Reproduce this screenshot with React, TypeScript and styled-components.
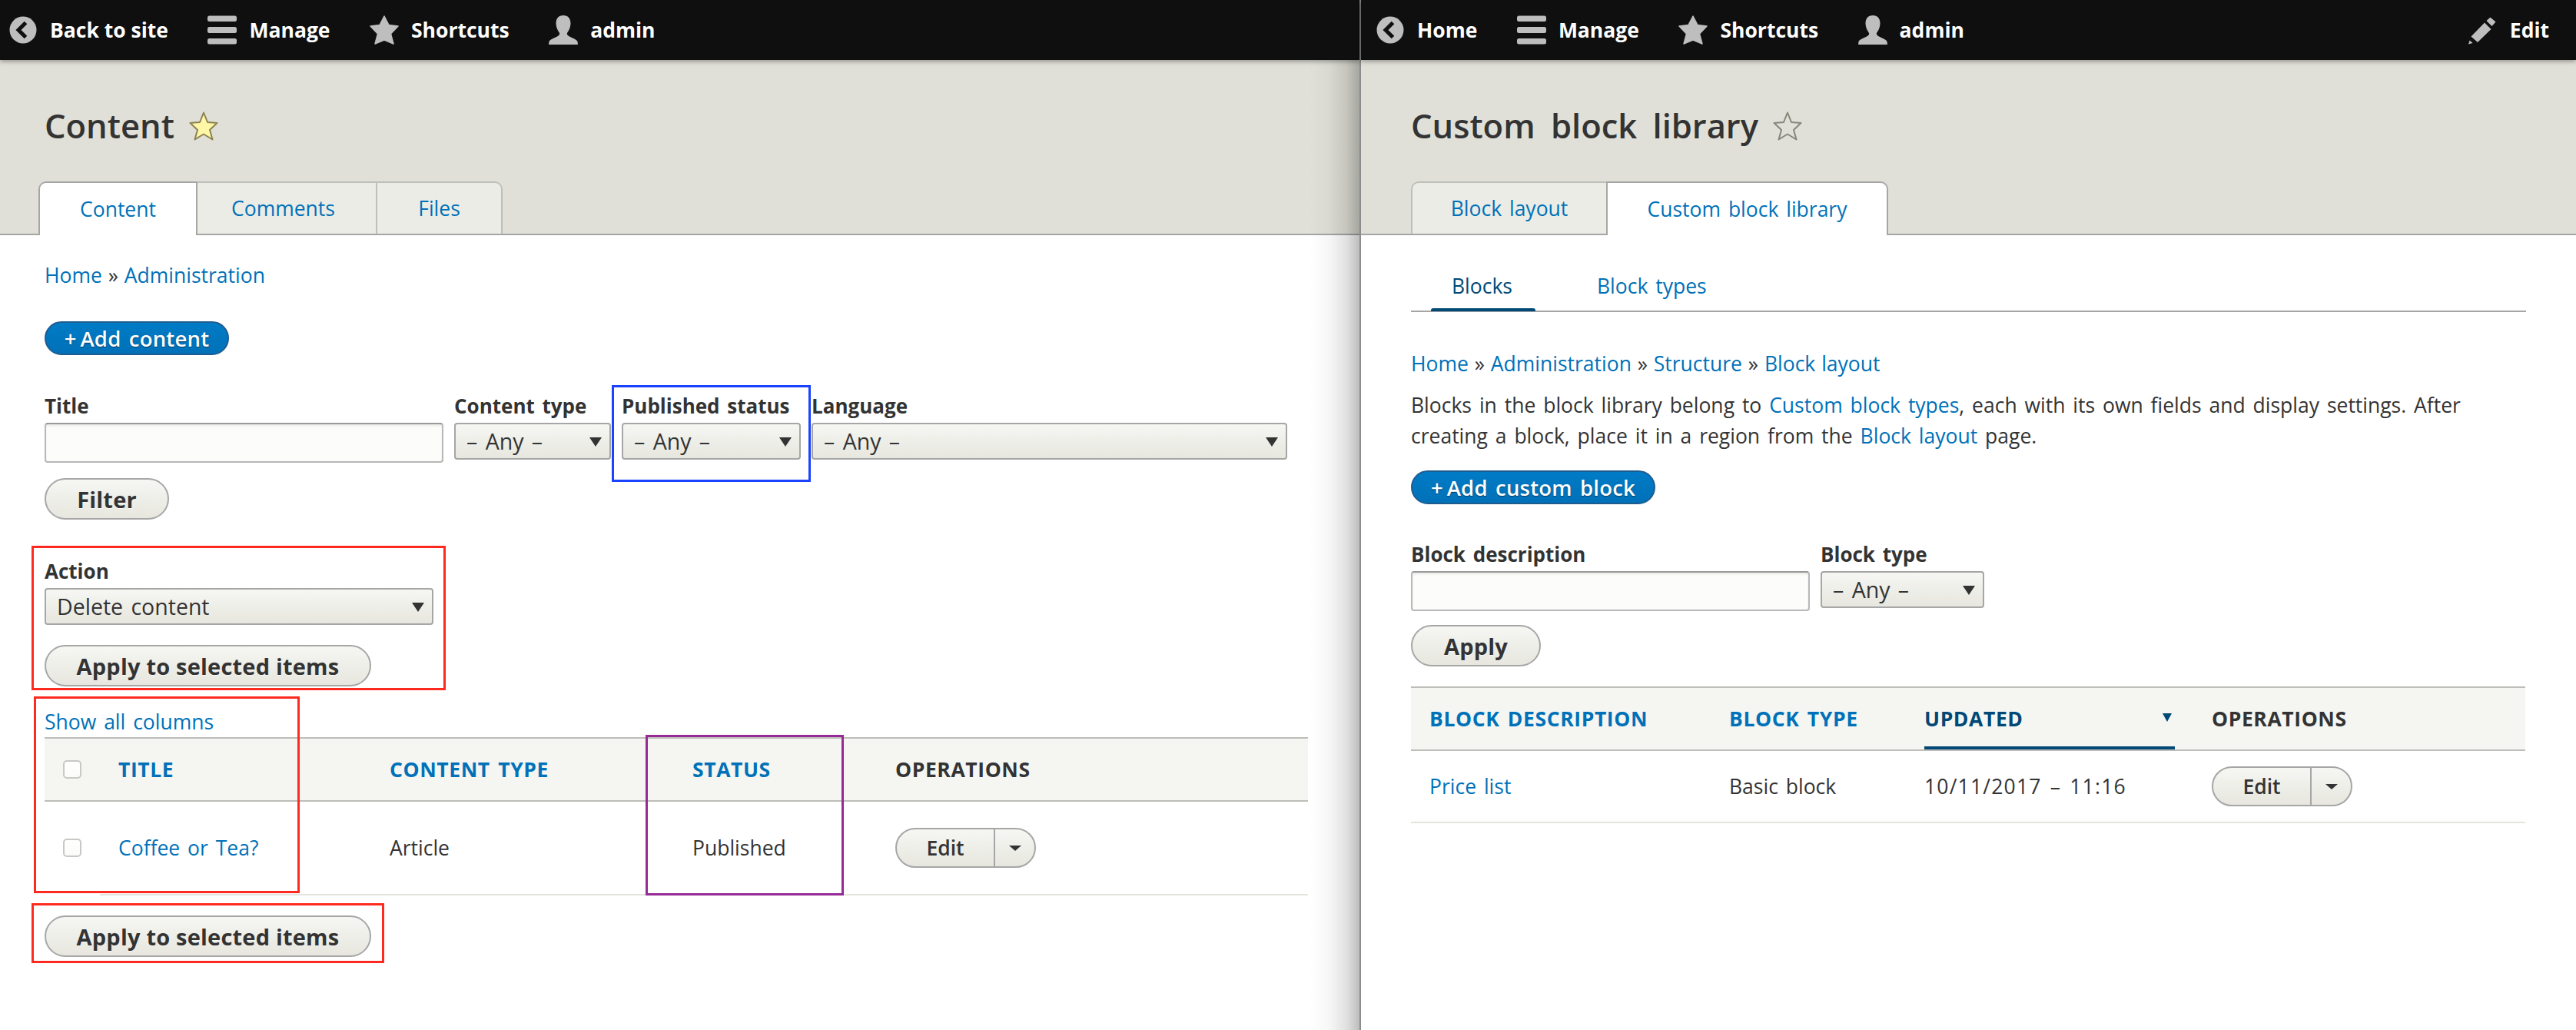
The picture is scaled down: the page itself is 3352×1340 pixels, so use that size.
import { FC, ReactNode } from 'react'
import styled, { createGlobalStyle } from 'styled-components'

const GlobalStyle = createGlobalStyle`
  * {
    box-sizing: border-box;
  }

  html, body {
    margin: 0;
    padding: 0;
    background: #fff;
    overflow: hidden;
  }

  body {
    font-family: "Open Sans", "Noto Sans", sans-serif;
    font-size: 26.5px;
    word-spacing: 3px;
    color: #333;
  }
`

const LINK = '#0071b8'
const DARK_LINK = '#004875'

const Screen = styled.div`
  display: flex;
  width: 3352px;
  height: 1340px;
  overflow: hidden;
`

const Pane = styled.section<{ $width: number }>`
  position: relative;
  flex: none;
  width: ${({ $width }) => $width}px;
  height: 100%;
`

const EdgeShade = styled.div`
  position: absolute;
  top: 78px;
  right: 0;
  bottom: 0;
  width: 66px;
  background: linear-gradient(to right, rgba(0, 0, 0, 0), rgba(0, 0, 0, .03) 40%, rgba(0, 0, 0, .12) 75%, rgba(0, 0, 0, .26));
  pointer-events: none;
`

const EdgeLine = styled.div`
  flex: none;
  width: 2px;
  height: 100%;
  background: #8c8c8a;
`

const Toolbar = styled.nav<{ $start: number }>`
  position: relative;
  z-index: 2;
  display: flex;
  align-items: center;
  gap: 51.500px;
  height: 78px;
  padding: 0 35px 0 ${({ $start }) => $start}px;
  background: #0f0f0f;
  box-shadow: 0 2px 6px rgba(0, 0, 0, .35);
`

const ToolbarItem = styled.a<{ $push?: boolean }>`
  display: flex;
  align-items: center;
  gap: 16px;
  margin-left: ${({ $push }) => ($push ? 'auto' : '0')};
  font-size: 26.5px;
  font-weight: 700;
  word-spacing: 0;
  color: #fff;
  white-space: nowrap;
`

const ToolIcon = styled.svg`
  flex: none;
  display: block;
  width: 38px;
  height: 38px;
  fill: #bebebe;
`

const BackIcon = () => (
  <ToolIcon viewBox="0 0 38 38">
    <circle cx="19" cy="19" r="17.5" />
    <path d="M22.5 9.5 L13 19 L22.5 28.5" fill="none" stroke="#0f0f0f" strokeWidth="5" />
  </ToolIcon>
)

const MenuIcon = () => (
  <ToolIcon viewBox="0 0 38 38">
    <rect x="0" y="0.5" width="38" height="7.5" rx="2.5" />
    <rect x="0" y="15" width="38" height="8" rx="2.5" />
    <rect x="0" y="30" width="38" height="7.5" rx="2.5" />
  </ToolIcon>
)

const StarIcon = () => (
  <ToolIcon viewBox="0 0 38 38">
    <path d="M19 1 L25 12.5 L37 14 L27.5 24 L31 37 L19 32 L7 37 L10.500 24 L1 14 L13 12.500 Z" stroke="#bebebe" strokeWidth="1.500" strokeLinejoin="round" />
  </ToolIcon>
)

const UserIcon = () => (
  <ToolIcon viewBox="0 0 38 38">
    <path d="M19 0 C13 0 9.500 4 9.500 10.500 C9.500 15 11.500 19.500 13.500 22 C15 24 14 26 11 27.500 C7 29.500 2 31 .5 34 L0 38 H38 L37.500 34 C36 31 31 29.500 27 27.500 C24 26 23 24 24.500 22 C26.500 19.500 28.500 15 28.500 10.500 C28.500 4 25 0 19 0 Z" />
  </ToolIcon>
)

const PencilIcon = () => (
  <ToolIcon viewBox="0 0 38 38">
    <path d="M24.500 7 L28.500 3.500 L34.500 8.500 L30.500 13 Z" stroke="#bebebe" strokeWidth="1.500" strokeLinejoin="round" />
    <path d="M3.500 27.500 L21 9.500 L29.500 18 L12 35 Z" />
    <path d="M0 37.500 L1.700 32.500 L5.500 36 Z" />
  </ToolIcon>
)

const Header = styled.header<{ $tabsLeft: number, $titleLeft: number }>`
  position: relative;
  height: 228px;
  padding: 0 0 0 ${({ $titleLeft }) => $titleLeft}px;
  background: #e0e0d8;
  border-bottom: 2px solid #a6a6a6;

  ul {
    margin-left: ${({ $tabsLeft, $titleLeft }) => $tabsLeft - $titleLeft}px;
  }
`

const TitleRow = styled.div`
  display: flex;
  align-items: center;
  gap: 19px;
  height: 158px;
  padding-top: 14px;
`

const Title = styled.h1`
  margin: 0;
  font-size: 43.5px;
  font-weight: 600;
  line-height: 1;
  word-spacing: 9px;
  color: #333;
`

const TitleStar = styled.svg<{ $on?: boolean }>`
  flex: none;
  width: 38px;
  height: 38px;
  fill: ${({ $on }) => ($on ? '#fff6a8' : 'transparent')};
  stroke: ${({ $on }) => ($on ? '#8d8350' : '#86867a')};
  stroke-width: 2;
  stroke-linejoin: round;
`

const BookmarkStar: FC<{ on?: boolean }> = ({ on }) => (
  <TitleStar viewBox="0 0 38 38" $on={on}>
    <path d="M19 1.500 L24 14 L36.500 15 L27 24 L30.500 36.500 L19 29.500 L7.500 36.500 L11 24 L1.500 15 L14 14 Z" />
  </TitleStar>
)

const TabList = styled.ul`
  display: flex;
  align-items: flex-start;
  height: 70px;
  margin: 0;
  padding: 0;
  list-style: none;
`

const TabItem = styled.li<{ $active?: boolean, $width: number, $nudge?: number }>`
  flex: none;
  display: flex;
  align-items: center;
  justify-content: center;
  width: ${({ $width }) => $width}px;
  height: ${({ $active }) => ($active ? 70 : 68)}px;
  padding-right: ${({ $nudge }) => $nudge ?? 0}px;
  color: ${LINK};
  background: ${({ $active }) => ($active ? '#fff' : '#ecece6')};
  border: 2px solid ${({ $active }) => ($active ? '#a6a6a6' : '#bfbfba')};
  border-bottom: 0;
  margin-left: -2px;
  position: relative;
  z-index: ${({ $active }) => ($active ? 1 : 0)};
  font-size: 26.5px;

  &:first-child {
    margin-left: 0;
    border-top-left-radius: 10px;
  }

  &:last-child {
    border-top-right-radius: 10px;
  }
`

const Content = styled.main<{ $left: number, $right: number }>`
  padding: 0 ${({ $right }) => $right}px 0 ${({ $left }) => $left}px;
`

const Link = styled.a`
  color: ${LINK};
  text-decoration: none;
`

const Crumbs = styled.div<{ $top: number }>`
  margin-top: ${({ $top }) => $top}px;
  height: 40px;
  line-height: 40px;
  word-spacing: 1px;
  color: #333;
`

const Breadcrumb: FC<{ items: string[], top: number }> = ({ items, top }) => (
  <Crumbs $top={top}>
    {items.map((item, i) => (
      <span key={item}>
        {i > 0 && ' » '}
        <Link>{item}</Link>
      </span>
    ))}
  </Crumbs>
)

const SubTabs = styled.div`
  display: flex;
  align-items: stretch;
  height: 100px;
  padding: 0 0 0 53px;
  gap: 110px;
  border-bottom: 2px solid #a6a6a6;
`

const SubTab = styled.a<{ $active?: boolean }>`
  position: relative;
  display: flex;
  align-items: center;
  padding: 34px 0 0;
  color: ${({ $active }) => ($active ? DARK_LINK : LINK)};

  ${({ $active }) => $active && `
    &::after {
      content: '';
      position: absolute;
      left: -27px;
      right: -30px;
      bottom: -1px;
      height: 4px;
      border-radius: 3px 3px 0 0;
      background: ${DARK_LINK};
    }
  `}
`

const Description = styled.p`
  margin: 14px 0 0;
  line-height: 40px;
  color: #333;
`

const ActionButton = styled.a<{ $top: number, $width: number }>`
  display: flex;
  align-items: center;
  justify-content: center;
  width: ${({ $width }) => $width}px;
  height: 44px;
  margin-top: ${({ $top }) => $top}px;
  font-size: 27.5px;
  font-weight: 600;
  letter-spacing: .2px;
  color: #fff;
  text-shadow: 0 1px 1px rgba(0, 0, 0, .5);
  background: linear-gradient(#007bc6, #0071b8);
  border: 2px solid #1e5c90;
  border-radius: 22px;
`

const FilterRow = styled.div<{ $top: number }>`
  display: flex;
  align-items: flex-start;
  gap: 14px;
  margin-top: ${({ $top }) => $top}px;
`

const Field = styled.div`
  display: flex;
  flex-direction: column;
  flex: none;
`

const Label = styled.label`
  height: 36px;
  margin-bottom: 4px;
  line-height: 36px;
  font-size: 26px;
  font-weight: 700;
  color: #333;
  white-space: nowrap;
`

const TextInput = styled.input<{ $width: number }>`
  display: block;
  width: ${({ $width }) => $width}px;
  height: 52px;
  padding: 0 12px;
  background: #fcfcfa;
  border: 2px solid #b8b8b8;
  border-top-color: #999;
  border-radius: 4px;
  box-shadow: inset 0 2px 3px rgba(0, 0, 0, .08);
  outline: none;
`

const SelectBox = styled.div<{ $width: number }>`
  position: relative;
  width: ${({ $width }) => $width}px;
  height: 48px;

  &::after {
    content: '';
    position: absolute;
    top: 19px;
    right: 12px;
    border-left: 8.500px solid transparent;
    border-right: 8.500px solid transparent;
    border-top: 12px solid #333;
    pointer-events: none;
  }
`

const SelectField = styled.select`
  appearance: none;
  display: block;
  width: 100%;
  height: 100%;
  padding: 0 0 0 14px;
  font-family: inherit;
  font-size: 28.5px;
  word-spacing: 3px;
  color: #333;
  background: linear-gradient(#f6f6f3, #e7e7df);
  border: 2px solid #a6a6a6;
  border-radius: 4px;
  outline: none;
`

const Select: FC<{ value: string, width: number }> = ({ value, width }) => (
  <SelectBox $width={width}>
    <SelectField defaultValue={value}>
      <option>{value}</option>
    </SelectField>
  </SelectBox>
)

const PillButton = styled.button<{ $top: number, $width: number }>`
  display: block;
  width: ${({ $width }) => $width}px;
  height: 54px;
  margin-top: ${({ $top }) => $top}px;
  padding: 0;
  font-family: inherit;
  font-size: 29px;
  font-weight: 700;
  letter-spacing: .2px;
  word-spacing: 0;
  color: #333;
  text-shadow: 0 1px hsla(0, 0%, 100%, .6);
  background: linear-gradient(#f6f6f3, #e7e7df);
  border: 2px solid #a6a6a6;
  border-radius: 27px;
`

const ShowColumns = styled.div`
  height: 40px;
  margin-top: 26px;
  line-height: 40px;
`

const Table = styled.table<{ $width: number, $top?: number }>`
  width: ${({ $width }) => $width}px;
  margin-top: ${({ $top }) => $top ?? 0}px;
  table-layout: fixed;
  border-collapse: separate;
  border-spacing: 0;
`

const HeadCell = styled.th<{ $muted?: boolean }>`
  position: relative;
  height: 84px;
  padding: 0 0 0 24px;
  text-align: left;
  font-size: 26.5px;
  font-weight: 700;
  text-transform: uppercase;
  letter-spacing: .6px;
  color: ${({ $muted }) => ($muted ? '#333' : LINK)};
  background: #f5f5f2;
  border-top: 2.500px solid #bebdb9;
  border-bottom: 2.500px solid #bebdb9;
`

const SortedHeadCell = styled(HeadCell)`
  color: ${DARK_LINK};

  &::before {
    content: '';
    position: absolute;
    top: 33px;
    right: 28px;
    border-left: 6.500px solid transparent;
    border-right: 6.500px solid transparent;
    border-top: 11px solid ${DARK_LINK};
  }

  &::after {
    content: '';
    position: absolute;
    left: 24px;
    right: 24px;
    bottom: 0;
    height: 4px;
    background: ${DARK_LINK};
  }
`

const BodyCell = styled.td<{ $bare?: boolean, $height: number }>`
  height: ${({ $height }) => $height}px;
  padding: 0 0 0 24px;
  color: #333;
  white-space: nowrap;
  border-bottom: 2px solid ${({ $bare }) => ($bare ? 'transparent' : '#e4e4de')};
`

const DateText = styled.span`
  letter-spacing: 1.200px;
`

const Check = styled.input`
  appearance: none;
  display: block;
  width: 24px;
  height: 24px;
  margin: 0;
  background: linear-gradient(#fff, #fbfbf9);
  border: 2px solid #c8c8c4;
  border-radius: 5px;
`

const DropButton = styled.div`
  display: flex;
  align-items: stretch;
  width: 183px;
  height: 52px;
  background: linear-gradient(#f6f6f3, #e7e7df);
  border: 2px solid #a6a6a6;
  border-radius: 26px;
`

const DropMain = styled.span`
  display: flex;
  align-items: center;
  justify-content: center;
  width: 128px;
  font-size: 26.5px;
  font-weight: 600;
  color: #333;
  border-right: 2px solid #a6a6a6;
`

const DropToggle = styled.span`
  flex: 1;
  display: flex;
  align-items: center;
  justify-content: center;

  &::after {
    content: '';
    border-left: 8px solid transparent;
    border-right: 8px solid transparent;
    border-top: 7px solid #333;
  }
`

const EditDrop = () => (
  <DropButton>
    <DropMain>Edit</DropMain>
    <DropToggle />
  </DropButton>
)

const Callout = styled.div<{ $x: number, $y: number, $w: number, $h: number, $color: string }>`
  position: absolute;
  left: ${({ $x }) => $x}px;
  top: ${({ $y }) => $y}px;
  width: ${({ $w }) => $w}px;
  height: ${({ $h }) => $h}px;
  border: 3.500px solid ${({ $color }) => $color};
  pointer-events: none;
`

const RED = '#ff2a1f'
const BLUE = '#1a43ff'
const PURPLE = '#962a96'

type TBarItem = { icon: ReactNode, label: string }

const barItems = (first: string): TBarItem[] => [
  { icon: <BackIcon />, label: first },
  { icon: <MenuIcon />, label: 'Manage' },
  { icon: <StarIcon />, label: 'Shortcuts' },
  { icon: <UserIcon />, label: 'admin' }
]

const contentFilters = [
  { label: 'Content type', width: 204 },
  { label: 'Published status', width: 233 },
  { label: 'Language', width: 619 }
]

const App = () => (
  <Screen>
    <GlobalStyle />
    <Pane $width={1769}>
      <Toolbar $start={11}>
        {barItems('Back to site').map(({ icon, label }) => (
          <ToolbarItem key={label}>{icon}{label}</ToolbarItem>
        ))}
      </Toolbar>
      <Header $titleLeft={58} $tabsLeft={50}>
        <TitleRow>
          <Title>Content</Title>
          <BookmarkStar on />
        </TitleRow>
        <TabList>
          <TabItem $active $width={207}>Content</TabItem>
          <TabItem $width={236} $nudge={9}>Comments</TabItem>
          <TabItem $width={165}>Files</TabItem>
        </TabList>
      </Header>
      <Content $left={58} $right={67}>
        <Breadcrumb items={['Home', 'Administration']} top={32} />
        <ActionButton $top={40} $width={240}>+{'\u2009'}Add content</ActionButton>
        <FilterRow $top={48}>
          <Field>
            <Label>Title</Label>
            <TextInput $width={519} />
          </Field>
          {contentFilters.map(({ label, width }) => (
            <Field key={label}>
              <Label>{label}</Label>
              <Select value="– Any –" width={width} />
            </Field>
          ))}
        </FilterRow>
        <PillButton $top={20} $width={162}>Filter</PillButton>
        <FilterRow $top={49}>
          <Field>
            <Label>Action</Label>
            <Select value="Delete content" width={506} />
          </Field>
        </FilterRow>
        <PillButton $top={26} $width={425}>Apply to selected items</PillButton>
        <ShowColumns><Link>Show all columns</Link></ShowColumns>
        <Table $width={1644}>
          <colgroup>
            <col width={72} />
            <col width={353} />
            <col width={394} />
            <col width={264} />
            <col width={561} />
          </colgroup>
          <thead>
            <tr>
              <HeadCell><Check type="checkbox" /></HeadCell>
              <HeadCell>Title</HeadCell>
              <HeadCell>Content type</HeadCell>
              <HeadCell>Status</HeadCell>
              <HeadCell $muted>Operations</HeadCell>
            </tr>
          </thead>
          <tbody>
            <tr>
              <BodyCell $bare $height={122}><Check type="checkbox" /></BodyCell>
              <BodyCell $height={122}><Link>Coffee or Tea?</Link></BodyCell>
              <BodyCell $height={122}>Article</BodyCell>
              <BodyCell $height={122}>Published</BodyCell>
              <BodyCell $height={122}><EditDrop /></BodyCell>
            </tr>
          </tbody>
        </Table>
        <PillButton $top={26} $width={425}>Apply to selected items</PillButton>
      </Content>
      <EdgeShade />
      <Callout $x={796} $y={501} $w={259} $h={126} $color={BLUE} />
      <Callout $x={41} $y={710} $w={539} $h={188} $color={RED} />
      <Callout $x={44} $y={906} $w={346} $h={256} $color={RED} />
      <Callout $x={840} $y={956} $w={258} $h={209} $color={PURPLE} />
      <Callout $x={41} $y={1175} $w={459} $h={78} $color={RED} />
    </Pane>
    <EdgeLine />
    <Pane $width={1581}>
      <Toolbar $start={19}>
        {barItems('Home').map(({ icon, label }) => (
          <ToolbarItem key={label}>{icon}{label}</ToolbarItem>
        ))}
        <ToolbarItem $push><PencilIcon />Edit</ToolbarItem>
      </Toolbar>
      <Header $titleLeft={65} $tabsLeft={65}>
        <TitleRow>
          <Title>Custom block library</Title>
          <BookmarkStar />
        </TitleRow>
        <TabList>
          <TabItem $width={256}>Block layout</TabItem>
          <TabItem $active $width={367}>Custom block library</TabItem>
        </TabList>
      </Header>
      <Content $left={65} $right={65}>
        <SubTabs>
          <SubTab $active>Blocks</SubTab>
          <SubTab>Block types</SubTab>
        </SubTabs>
        <Breadcrumb items={['Home', 'Administration', 'Structure', 'Block layout']} top={47} />
        <Description>
          Blocks in the block library belong to <Link>Custom block types</Link>, each with its own fields and display settings. After<br />
          creating a block, place it in a region from the <Link>Block layout</Link> page.
        </Description>
        <ActionButton $top={25} $width={318}>+{'\u2009'}Add custom block</ActionButton>
        <FilterRow $top={47}>
          <Field>
            <Label>Block description</Label>
            <TextInput $width={519} />
          </Field>
          <Field>
            <Label>Block type</Label>
            <Select value="– Any –" width={213} />
          </Field>
        </FilterRow>
        <PillButton $top={18} $width={169}>Apply</PillButton>
        <Table $width={1450} $top={26}>
          <colgroup>
            <col width={390} />
            <col width={254} />
            <col width={374} />
            <col width={432} />
          </colgroup>
          <thead>
            <tr>
              <HeadCell>Block description</HeadCell>
              <HeadCell>Block type</HeadCell>
              <SortedHeadCell>Updated</SortedHeadCell>
              <HeadCell $muted>Operations</HeadCell>
            </tr>
          </thead>
          <tbody>
            <tr>
              <BodyCell $height={94}><Link>Price list</Link></BodyCell>
              <BodyCell $height={94}>Basic block</BodyCell>
              <BodyCell $height={94}><DateText>10/11/2017 – 11:16</DateText></BodyCell>
              <BodyCell $height={94}><EditDrop /></BodyCell>
            </tr>
          </tbody>
        </Table>
      </Content>
    </Pane>
  </Screen>
)

export default App
